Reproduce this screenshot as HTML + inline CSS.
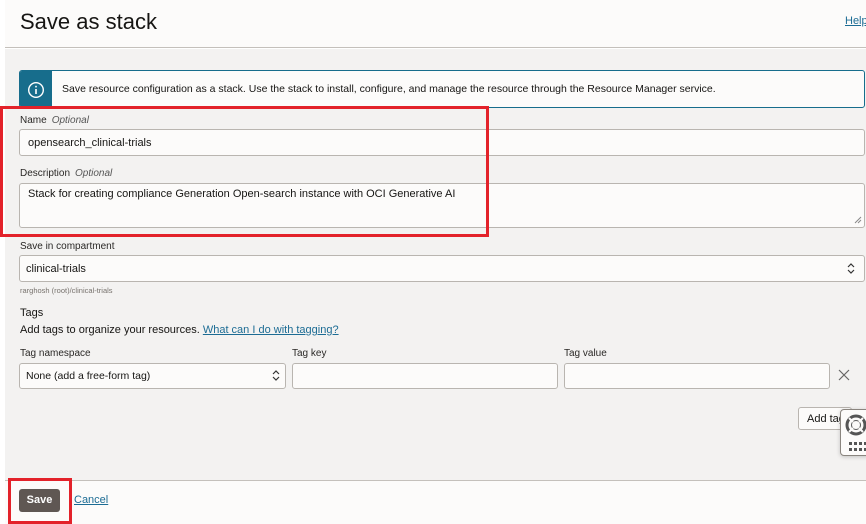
<!DOCTYPE html>
<html><head><meta charset="utf-8"><style>
*{box-sizing:border-box;margin:0;padding:0}
body{width:866px;height:524px;overflow:hidden;background:#fff;font-family:"Liberation Sans",Arial,sans-serif;color:#161513;position:relative}
.a{position:absolute}
.lbl{font-size:10px;color:#2a2826}
.lbl i{color:#555;margin-left:5px}
.inp{background:#fcfbfa;border:1px solid #b9b5b0;border-radius:3px;font-size:11px;padding-left:8px;display:flex;align-items:center}
a{color:#1c6c94;text-decoration:underline}
</style></head><body>
<div class="a" style="left:5px;top:0;width:861px;height:48px;background:#fcfbfa;border-bottom:1px solid #c4c0bb"></div>
<div class="a" style="left:20px;top:9px;font-size:22px;color:#161513">Save as stack</div>
<div class="a" style="left:845px;top:15px;font-size:11px"><a>Help</a></div>
<div class="a" style="left:5px;top:49px;width:861px;height:431px;background:#f3f2f1"></div>
<div class="a" style="left:5px;top:480px;width:861px;height:44px;background:#fcfbfa;border-top:1px solid #c4c0bb"></div>

<div class="a" style="left:19px;top:70px;width:846px;height:38px;border:1px solid #176d8c;border-radius:3px;background:#fcfbfa;overflow:hidden">
<div class="a" style="left:0;top:0;width:32px;height:38px;background:#176d8c"></div>
<svg class="a" style="left:7px;top:10px" width="18" height="18" viewBox="0 0 18 18"><circle cx="9" cy="9" r="7.3" fill="none" stroke="#fff" stroke-width="1.4"/><rect x="8.2" y="8" width="1.6" height="5" fill="#fff"/><rect x="8.2" y="4.8" width="1.6" height="1.6" fill="#fff"/></svg>
<div class="a" style="left:42px;top:12px;font-size:10.5px">Save resource configuration as a stack. Use the stack to install, configure, and manage the resource through the Resource Manager service.</div>
</div>

<div class="a lbl" style="left:20px;top:115px">Name<i>Optional</i></div>
<div class="a inp" style="left:19px;top:129px;width:846px;height:27px">opensearch_clinical-trials</div>
<div class="a lbl" style="left:20px;top:168px">Description<i>Optional</i></div>
<div class="a inp" style="left:19px;top:183px;width:846px;height:45px;align-items:flex-start;padding-top:4px">Stack for creating compliance Generation Open-search instance with OCI Generative AI</div>
<svg class="a" style="left:854px;top:216px" width="8" height="8"><path d="M7 1L1 7M7 4L4 7" stroke="#888" stroke-width="1"/></svg>
<div class="a" style="left:0;top:106px;width:489px;height:131px;border:3px solid #e3222a"></div>

<div class="a lbl" style="left:20px;top:241px">Save in compartment</div>
<div class="a inp" style="left:19px;top:255px;width:846px;height:27px;padding-left:6px">clinical-trials</div>
<svg class="a" style="left:846px;top:262px" width="10" height="13"><path d="M2 5L5 2L8 5M2 8L5 11L8 8" fill="none" stroke="#333" stroke-width="1.2"/></svg>
<div class="a" style="left:20px;top:286px;font-size:7.5px;color:#77726d">rarghosh (root)/clinical-trials</div>
<div class="a" style="left:20px;top:307px;font-size:11px">Tags</div>
<div class="a" style="left:20px;top:324px;font-size:11px">Add tags to organize your resources. <a>What can I do with tagging?</a></div>
<div class="a lbl" style="left:20px;top:348px">Tag namespace</div>
<div class="a lbl" style="left:292px;top:348px">Tag key</div>
<div class="a lbl" style="left:564px;top:348px">Tag value</div>
<div class="a inp" style="left:19px;top:363px;width:267px;height:26px;padding-left:6px;font-size:10.5px">None (add a free-form tag)</div>
<svg class="a" style="left:271px;top:369px" width="10" height="13"><path d="M2 5L5 2L8 5M2 8L5 11L8 8" fill="none" stroke="#333" stroke-width="1.2"/></svg>
<div class="a inp" style="left:292px;top:363px;width:266px;height:26px"></div>
<div class="a inp" style="left:564px;top:363px;width:266px;height:26px"></div>
<svg class="a" style="left:838px;top:369px" width="12" height="12"><path d="M1 1L11 11M11 1L1 11" stroke="#666" stroke-width="1.2"/></svg>
<div class="a" style="left:798px;top:407px;width:54px;height:23px;border:1px solid #b9b5b0;border-radius:3px;background:#fcfbfa;font-size:11px;padding:5px 0 0 8px">Add tag</div>
<div class="a" style="left:840px;top:409px;width:30px;height:47px;border:1px solid #8a857f;border-radius:4px;background:#fcfbfa;box-shadow:0 1px 4px rgba(0,0,0,.2)">
<svg class="a" style="left:4px;top:4px" width="22" height="22" viewBox="0 0 22 22"><circle cx="11" cy="11" r="9" fill="none" stroke="#555" stroke-width="3"/><circle cx="11" cy="11" r="4.5" fill="#fcfbfa" stroke="#555" stroke-width="1"/><path d="M4 4l4 4M18 4l-4 4M4 18l4-4M18 18l-4-4" stroke="#fcfbfa" stroke-width="2"/></svg>
<svg class="a" style="left:8px;top:32px" width="20" height="10"><g fill="#555"><rect x="0" y="0" width="3" height="3"/><rect x="5" y="0" width="3" height="3"/><rect x="10" y="0" width="3" height="3"/><rect x="15" y="0" width="3" height="3"/><rect x="0" y="6" width="3" height="3"/><rect x="5" y="6" width="3" height="3"/><rect x="10" y="6" width="3" height="3"/><rect x="15" y="6" width="3" height="3"/></g></svg>
</div>

<div class="a" style="left:19px;top:489px;width:41px;height:23px;background:#5f5753;border-radius:3px;color:#fff;font-size:11px;font-weight:bold;text-align:center;line-height:23px">Save</div>
<div class="a" style="left:74px;top:494px;font-size:11px"><a>Cancel</a></div>
<div class="a" style="left:8px;top:478px;width:64px;height:46px;border:3px solid #e3222a"></div>
</body></html>
